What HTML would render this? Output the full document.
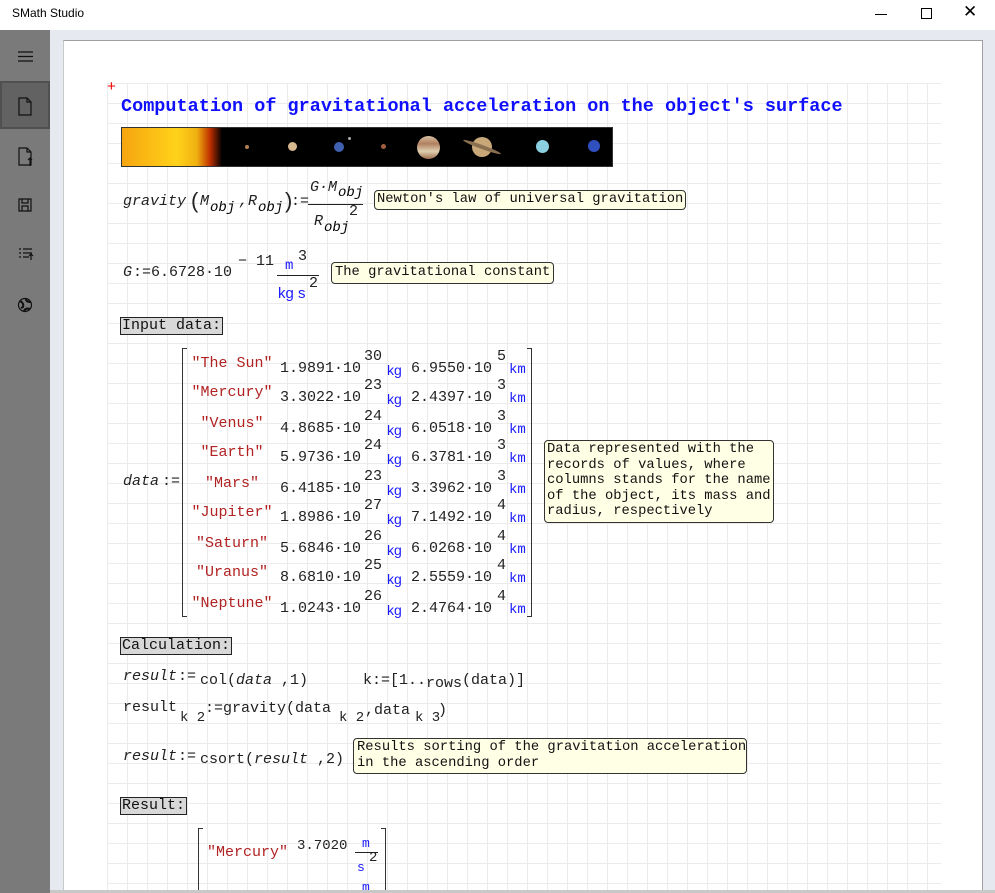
<!DOCTYPE html>
<html><head><meta charset="utf-8"><style>
*{margin:0;padding:0;box-sizing:border-box}
html{width:995px;height:893px;overflow:hidden}
body{width:995px;height:893px;overflow:hidden;background:#e6e9f0;font-family:"Liberation Mono",monospace;position:relative}
.a{position:absolute;white-space:pre}
#tb{position:absolute;left:0;top:0;width:995px;height:30px;background:#fff}
#sb{position:absolute;left:0;top:30px;width:50px;height:863px;background:#7a7a7a}
#sel{position:absolute;left:0;top:51px;width:50px;height:48px;background:#626262;border:2px solid #505050}
#page{position:absolute;left:63px;top:40px;width:920px;height:853px;background:#fff;border-top:1px solid #a0a0a0;border-left:1px solid #c8c8c8;border-right:1px solid #a0a0a0}
#grid{position:absolute;left:107px;top:83px;width:834px;height:810px;
background-image:linear-gradient(to right,#ebebeb 1px,transparent 1px),linear-gradient(to bottom,#ebebeb 1px,transparent 1px);background-size:20px 20px}
.m{font-size:15px;color:#222}
.i{font-style:italic}
.s{color:#b22222}
.u{color:#1a1aff;font-family:"Liberation Sans",sans-serif}
.tt{position:absolute;background:#ffffe6;border:1px solid #333;border-radius:4px;font-size:13.8px;line-height:15.5px;padding:1px 2px;color:#111;white-space:pre}
.hd{position:absolute;background:#d8d8d8;border:1px solid #222;font-size:15px;line-height:16px;padding:0 1px;color:#111}
.br{position:absolute;border:1.5px solid #333}
</style></head><body>
<div id="tb"><div class="a" style="left:12px;top:6px;font:12px 'Liberation Sans',sans-serif;color:#000">SMath Studio</div>
<div class="a" style="left:875px;top:14px;width:12px;height:1px;background:#000"></div>
<div class="a" style="left:921px;top:8px;width:11px;height:11px;border:1px solid #000"></div>
<div class="a" style="left:963px;top:2px;font:17px 'Liberation Sans',sans-serif;color:#000">✕</div></div>
<div id="sb"><div id="sel"></div>
<svg class="a" style="left:0;top:0" width="50" height="300" viewBox="0 0 50 300" fill="none" stroke="#111" stroke-width="1.2">
<path d="M18 22h15M18 26.5h15M18 31h15"/>
<path d="M19 68h8l4 4v13h-12z M27 68v4h4"/>
<path d="M19 118h8l4 4v13h-12z M27 118v4h4 M30 128v8 M28 130l2-2 2 2"/>
<path d="M19 169h12v12h-12z M22 169v4h6v-4 M22 181v-5h6v5"/>
<path d="M19 219h2M23 219h9M19 223h2M23 223h9M19 227h2M23 227h6M31 224v6M29 226l2-2 2 2"/>
<circle cx="25" cy="275" r="6.5"/><path d="M20 271c2 1 4 3 3 6l-2 1M26 269c0 2 2 3 5 3M24 281c1-2 3-3 6-2" stroke-width="2"/>
</svg></div>
<div id="page"></div>
<div id="grid"></div>
<div class="a" style="left:107px;top:78px;color:#e00;font:15px 'Liberation Sans',sans-serif">+</div>
<div class="a" style="left:121px;top:96px;font-size:18.5px;font-weight:bold;color:#1010ff">Computation of gravitational acceleration on the object's surface</div>
<div class="a" style="left:121px;top:127px;width:492px;height:40px;background:#000;border:1px solid #333">
<div class="a" style="left:0;top:0;width:100px;height:38px;background:linear-gradient(to right,#f6a510,#ffd21a 55%,#f0b010 75%,#c03000 88%,#000)"></div>
<div class="a" style="left:123px;top:17px;width:4px;height:4px;border-radius:50%;background:#b08050"></div>
<div class="a" style="left:166px;top:14px;width:9px;height:9px;border-radius:50%;background:#d6b890"></div>
<div class="a" style="left:212px;top:14px;width:10px;height:10px;border-radius:50%;background:#4060b0"></div>
<div class="a" style="left:226px;top:9px;width:3px;height:3px;border-radius:50%;background:#aaa"></div>
<div class="a" style="left:259px;top:16px;width:5px;height:5px;border-radius:50%;background:#a06040"></div>
<div class="a" style="left:295px;top:8px;width:23px;height:23px;border-radius:50%;background:linear-gradient(#d8c0a0,#b08060,#e0d0b0,#a07050)"></div>
<div class="a" style="left:350px;top:9px;width:20px;height:20px;border-radius:50%;background:#c8a878"></div>
<div class="a" style="left:340px;top:17px;width:40px;height:4px;border-radius:50%;background:#8a7050;transform:rotate(20deg)"></div>
<div class="a" style="left:414px;top:12px;width:13px;height:13px;border-radius:50%;background:#8ad0e0"></div>
<div class="a" style="left:466px;top:12px;width:12px;height:12px;border-radius:50%;background:#3050c0"></div>
</div>
<!-- gravity -->
<div class="a m i" style="left:123px;top:193px">gravity</div>
<div class="a m" style="left:191px;top:188px;font-size:22px;font-family:'Liberation Sans',sans-serif;font-weight:100">(</div>
<div class="a m i" style="left:200px;top:193px">M</div><div class="a i" style="left:210px;top:200px;font-size:14px">obj</div>
<div class="a m i" style="left:239px;top:193px">,R</div><div class="a i" style="left:258px;top:200px;font-size:14px">obj</div>
<div class="a m" style="left:285px;top:188px;font-size:22px;font-family:'Liberation Sans',sans-serif">)</div>
<div class="a m" style="left:291px;top:193px">:=</div>
<div class="a m i" style="left:310px;top:179px">G·M</div><div class="a i" style="left:338px;top:185px;font-size:14px">obj</div>
<div class="a" style="left:308px;top:204px;width:55px;height:1px;background:#222"></div>
<div class="a m" style="left:349px;top:203px">2</div>
<div class="a m i" style="left:314px;top:213px">R</div><div class="a i" style="left:324px;top:220px;font-size:14px">obj</div>
<div class="tt" style="left:374px;top:190px">Newton's law of universal gravitation</div>
<!-- G -->
<div class="a m i" style="left:123px;top:264px">G</div><div class="a m" style="left:133px;top:264px">:=6.6728·10</div>
<div class="a m" style="left:238px;top:253px">− 11</div>
<div class="a u" style="left:285px;top:258px;font-size:14px;font-family:'Liberation Mono'">m</div>
<div class="a m" style="left:298px;top:248px">3</div>
<div class="a" style="left:277px;top:275px;width:42px;height:1px;background:#222"></div>
<div class="a u" style="left:278px;top:285px;font-size:15px">kg s</div>
<div class="a m" style="left:309px;top:275px">2</div>
<div class="tt" style="left:331px;top:262px;padding:2px 3px">The gravitational constant</div>
<div class="hd" style="left:120px;top:317px">Input data:</div>
<!-- matrix -->
<div class="a m i" style="left:123px;top:473px">data</div><div class="a m" style="left:162px;top:473px">:=</div>
<div class="br" style="left:182px;top:348px;width:5px;height:269px;border-right:none"></div>
<div class="br" style="left:527px;top:348px;width:5px;height:269px;border-left:none"></div>
<div id="mx"></div>
<div class="tt" style="left:544px;top:440px;height:83px;line-height:15.6px">Data represented with the
records of values, where
columns stands for the name
of the object, its mass and
radius, respectively</div>
<div class="hd" style="left:120px;top:637px">Calculation:</div>
<div class="a m i" style="left:123px;top:668px">result</div><div class="a m" style="left:178px;top:668px">:=</div>
<div class="a m" style="left:200px;top:672px">col(<i>data</i> ,1)</div>
<div class="a m" style="left:363px;top:672px">k:=[1..<span style="position:relative;top:3px">rows</span>(data)]</div>
<div class="a m" style="left:123px;top:699px">result</div><div class="a m" style="left:180px;top:710px;font-size:14px">k 2</div>
<div class="a m" style="left:205px;top:700px">:=gravity(data</div>
<div class="a m" style="left:339px;top:710px;font-size:14px">k 2</div>
<div class="a m" style="left:365px;top:702px">,data</div>
<div class="a m" style="left:415px;top:710px;font-size:14px">k 3</div>
<div class="a m" style="left:438px;top:702px">)</div>
<div class="a m i" style="left:123px;top:748px">result</div><div class="a m" style="left:178px;top:748px">:=</div>
<div class="a m" style="left:200px;top:751px">csort(<i>result</i> ,2)</div>
<div class="tt" style="left:353px;top:738px;width:394px;height:36px;padding:1px 3px">Results sorting of the gravitation acceleration
in the ascending order</div>
<div class="hd" style="left:120px;top:797px">Result:</div>
<div class="br" style="left:198px;top:828px;width:5px;height:80px;border-right:none;border-bottom:none"></div>
<div class="br" style="left:381px;top:828px;width:5px;height:80px;border-left:none;border-bottom:none"></div>
<div class="a m s" style="left:207px;top:844px">"Mercury"</div>
<div class="a m" style="left:297px;top:838px;font-size:14px">3.7020</div>
<div class="a u" style="left:362px;top:836px;font-size:13px;font-family:'Liberation Mono'">m</div>
<div class="a" style="left:355px;top:852px;width:23px;height:1px;background:#222"></div>
<div class="a m" style="left:369px;top:850px;font-size:14px">2</div>
<div class="a u" style="left:357px;top:860px;font-size:13px;font-family:'Liberation Mono'">s</div>
<div class="a u" style="left:362px;top:880px;font-size:13px;font-family:'Liberation Mono'">m</div>
<div class="a" style="left:50px;top:890px;width:945px;height:3px;background:#c8c8c8"></div>
<script>
var r=[["\"The Sun\"","1.9891","30","6.9550","5"],["\"Mercury\"","3.3022","23","2.4397","3"],["\"Venus\"","4.8685","24","6.0518","3"],["\"Earth\"","5.9736","24","6.3781","3"],["\"Mars\"","6.4185","23","3.3962","3"],["\"Jupiter\"","1.8986","27","7.1492","4"],["\"Saturn\"","5.6846","26","6.0268","4"],["\"Uranus\"","8.6810","25","2.5559","4"],["\"Neptune\"","1.0243","26","2.4764","4"]];
var ys=[355,384,415,444,475,504,535,564,595],h="";
r.forEach(function(q,i){var y=ys[i];
h+='<div class="a m s" style="left:182px;width:100px;text-align:center;top:'+y+'px">'+q[0]+'</div>';
h+='<div class="a m" style="left:280px;top:'+(y+5)+'px">'+q[1]+'·10</div>';
h+='<div class="a m" style="left:364px;top:'+(y-7)+'px">'+q[2]+'</div>';
h+='<div class="a u" style="left:387px;top:'+(y+7)+'px;font-size:14px">kg</div>';
h+='<div class="a m" style="left:411px;top:'+(y+5)+'px">'+q[3]+'·10</div>';
h+='<div class="a m" style="left:497px;top:'+(y-7)+'px">'+q[4]+'</div>';
h+='<div class="a u" style="left:509px;top:'+(y+7)+'px;font-size:14px;font-family:\'Liberation Mono\'">km</div>';});
document.getElementById("mx").innerHTML=h;
</script>
</body></html>
